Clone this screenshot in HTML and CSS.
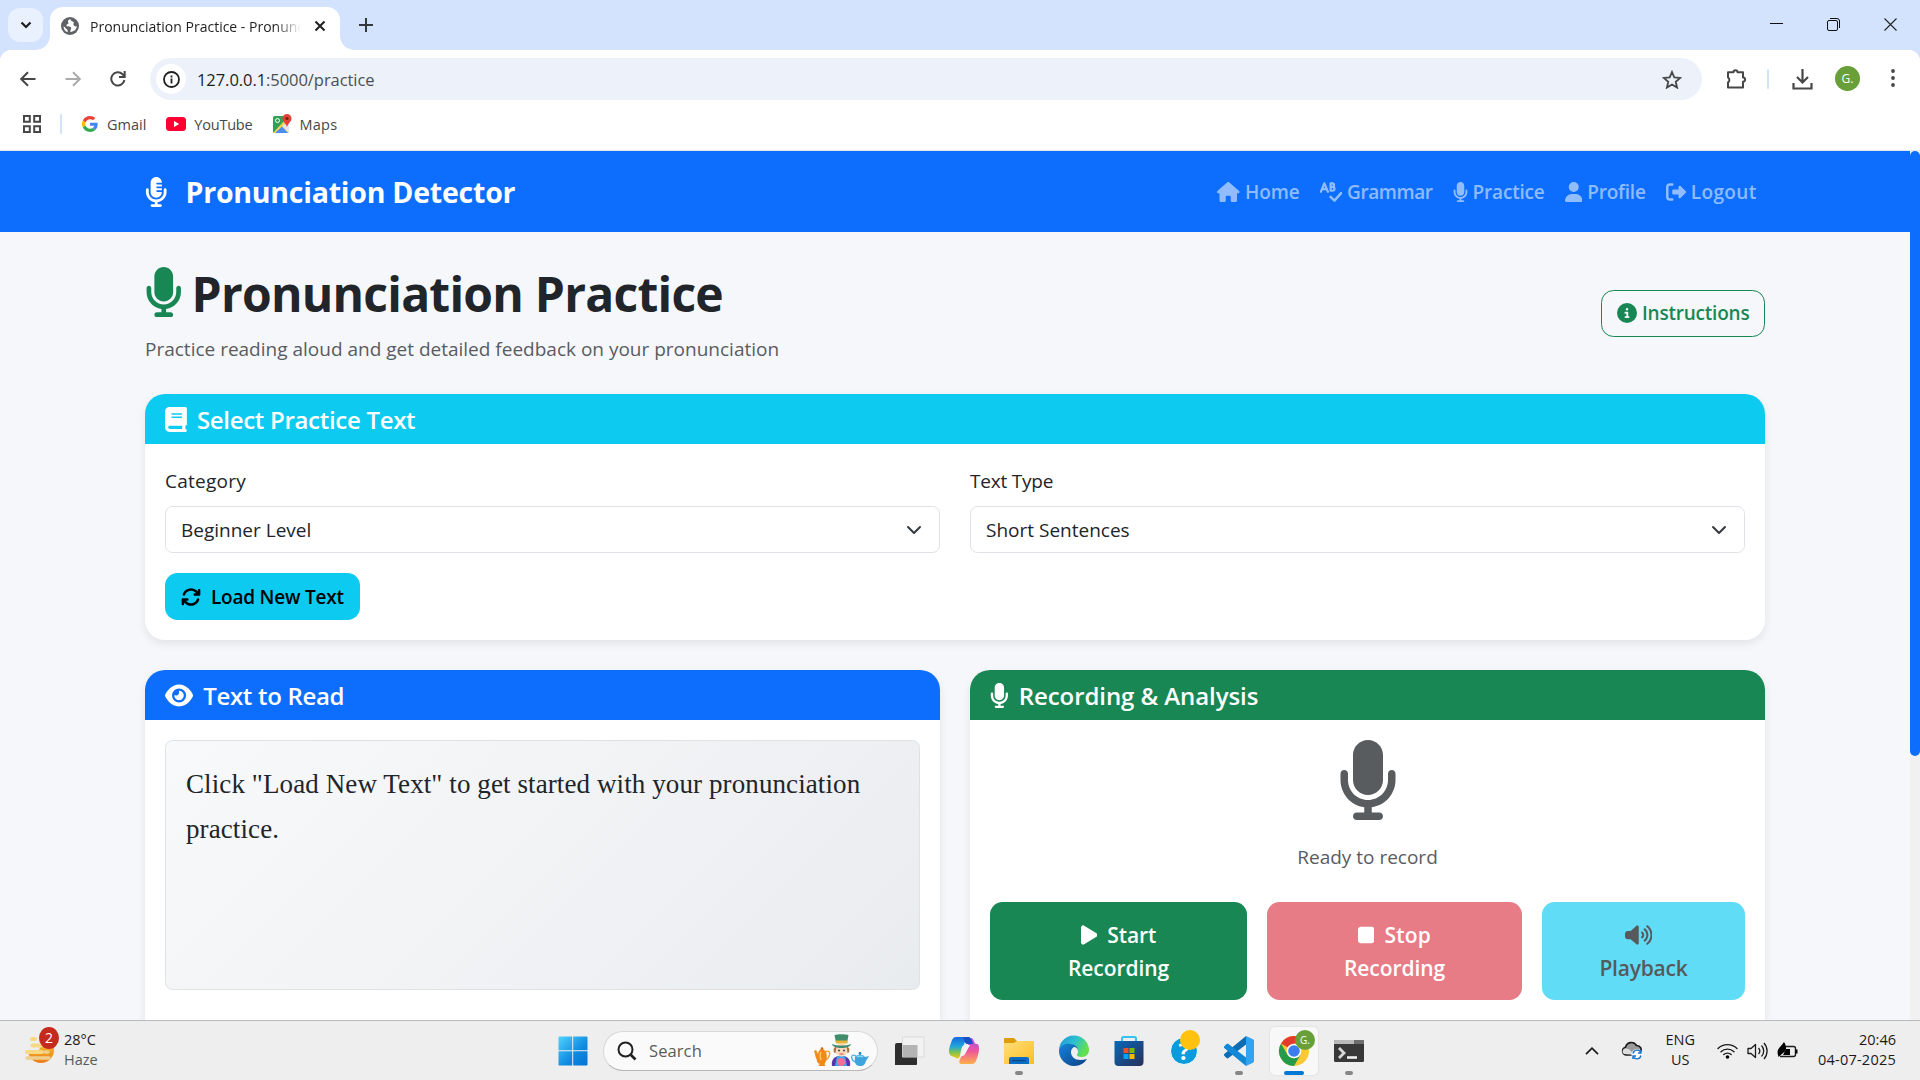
FILE: index.html
```html
<!DOCTYPE html>
<html lang="en">
<head>
<meta charset="utf-8">
<title>Pronunciation Practice - Pronunciation Detector</title>
<link rel="stylesheet" href="styles.css">
</head>
<body>
<svg width="0" height="0" class="defs">
  <defs>
    <symbol id="mic" viewBox="0 0 384 512"><path d="M192 0C139 0 96 43 96 96V256c0 53 43 96 96 96s96-43 96-96V96c0-53-43-96-96-96zM64 216c0-13.3-10.7-24-24-24s-24 10.7-24 24v40c0 89.1 66.2 162.7 152 174.4V464H120c-13.3 0-24 10.7-24 24s10.7 24 24 24h72 72c13.3 0 24-10.7 24-24s-10.7-24-24-24H216V430.4c85.8-11.7 152-85.3 152-174.4V216c0-13.3-10.7-24-24-24s-24 10.7-24 24v40c0 70.7-57.3 128-128 128s-128-57.3-128-128V216z"/></symbol>
    <linearGradient id="win" x1="0" y1="0" x2="1" y2="1"><stop offset="0" stop-color="#4fd3ff"/><stop offset=".6" stop-color="#0f8ae0"/><stop offset="1" stop-color="#0273d4"/></linearGradient>
    <linearGradient id="sun" x1="0" y1="0" x2="0" y2="1"><stop offset="0" stop-color="#f5c02c"/><stop offset="1" stop-color="#ee7a1c"/></linearGradient>
    <linearGradient id="folder" x1="0" y1="0" x2="1" y2="1"><stop offset="0" stop-color="#ffe07a"/><stop offset="1" stop-color="#fdbc22"/></linearGradient>
    <linearGradient id="edgeTop" x1="0" y1="0" x2="1" y2=".4"><stop offset="0" stop-color="#1d93dc"/><stop offset=".55" stop-color="#2cc0cf"/><stop offset="1" stop-color="#63e04e"/></linearGradient>
    <linearGradient id="edgeBot" x1="0" y1="0" x2="1" y2="1"><stop offset="0" stop-color="#1684d8"/><stop offset="1" stop-color="#0c3f86"/></linearGradient>
    <linearGradient id="store" x1="0" y1="0" x2="1" y2="1"><stop offset="0" stop-color="#0669b8"/><stop offset="1" stop-color="#2a2f5c"/></linearGradient>
    <linearGradient id="copA" x1="0" y1="0" x2="0" y2="1"><stop offset="0" stop-color="#1569e0"/><stop offset=".45" stop-color="#21a7d8"/><stop offset=".75" stop-color="#8bc540"/><stop offset="1" stop-color="#f3c51d"/></linearGradient>
    <linearGradient id="copB" x1="0" y1="0" x2="0" y2="1"><stop offset="0" stop-color="#a24df0"/><stop offset=".5" stop-color="#f0559b"/><stop offset="1" stop-color="#fcb04a"/></linearGradient>
  </defs>
</svg>

<header class="tabs">
  <div class="tab-search"><svg width="12" height="8" viewBox="0 0 12 8"><path d="M1.500 1.500 6 6l4.500-4.500" fill="none" stroke="#1f1f1f" stroke-width="2.200"/></svg></div>
  <div class="tab">
    <svg class="globe" width="18" height="18" viewBox="0 0 18 18"><circle cx="9" cy="9" r="9" fill="#5f6368"/><path d="M9.500 2.200C6 3 7 5 7.500 5.800 8 7 5.500 6.800 5.500 8.500c0 1.500 3.500.5 4.500 2 .8 1.300-1 2-.5 4.500C13 14.500 15.800 12.500 15.800 9c-1.500 1-3-.2-3.300-1.200C12 6.500 13.500 6 12.500 5c-1-.8-2.500-.5-3-2.800zM2.500 9.500c0 3 2 5 4 5.800.5-1.500 0-2.500-1.200-3.500-.8-.8-1.500-2-2.800-2.300z" fill="#fff"/></svg>
    <span class="tab-title"><span class="t t-tab">Pronunciation Practice - Pronunciation</span></span>
    <svg class="tab-close" width="12" height="12" viewBox="0 0 12 12"><path d="M1.500 1.500l9 9M10.500 1.500l-9 9" stroke="#1f1f1f" stroke-width="2"/></svg>
  </div>
  <svg class="new-tab" width="14" height="14" viewBox="0 0 14 14"><path d="M7 0v14M0 7h14" stroke="#33383d" stroke-width="2"/></svg>
  <div class="win-btns">
    <svg width="13" height="13" viewBox="0 0 13 13"><path d="M0 5.500h13" stroke="#111"/></svg>
    <svg width="13" height="13" viewBox="0 0 13 13"><rect x=".5" y="2.500" width="10" height="10" rx="1.500" fill="none" stroke="#111"/><path d="M3 .5h7a2.500 2.500 0 0 1 2.500 2.500v7" fill="none" stroke="#111"/></svg>
    <svg width="13" height="13" viewBox="0 0 13 13"><path d="M.5.5l12 12M12.500.5l-12 12" stroke="#222" stroke-width="1.100"/></svg>
  </div>
</header>

<div class="toolbar">
  <div class="nav-icons">
    <svg width="16" height="16" viewBox="0 0 16 16"><path d="M15.500 8H1.500M8 1.200 1.200 8 8 14.800" fill="none" stroke="#474747" stroke-width="2"/></svg>
    <svg width="16" height="16" viewBox="0 0 16 16"><path d="M.5 8h14M8 1.200 14.800 8 8 14.800" fill="none" stroke="#ababab" stroke-width="2"/></svg>
    <svg width="16" height="16" viewBox="0 0 16 16"><path d="M14.400 9A6.600 6.600 0 1 1 12.600 3.300L14.500 5.200M14.700 0v5.900H9" fill="none" stroke="#474747" stroke-width="2"/></svg>
  </div>
  <div class="omnibox">
    <div class="site-info"><svg width="17" height="17" viewBox="0 0 17 17"><circle cx="8.500" cy="8.500" r="7.500" fill="none" stroke="#1f1f1f" stroke-width="1.800"/><path d="M8.500 7.500V12.500M8.500 4.500v2" stroke="#1f1f1f" stroke-width="1.800"/></svg></div>
    <span class="t t-url">127.0.0.1<span class="dim">:5000/practice</span></span>
    <svg class="star" width="20" height="19" viewBox="0 0 20 19"><path d="M10 2l2.300 5.400 5.900.5-4.500 3.900 1.400 5.800-5.100-3.100-5.100 3.100 1.400-5.800L1.800 7.900l5.900-.5z" fill="none" stroke="#474747" stroke-width="1.800"/></svg>
  </div>
  <svg class="ext" width="21" height="21" viewBox="0 0 21 21"><path d="M2 4.200h5.500a2 2 0 0 1 4 0H17v5.300a2 2 0 0 1 0 4.200v5.800H2v-5.200a2.800 2.800 0 0 0 0-4.800z" fill="none" stroke="#474747" stroke-width="2" stroke-linejoin="round"/></svg>
  <i class="sep"></i>
  <svg class="dl" width="21" height="21" viewBox="0 0 21 21"><path d="M10.500 0v13M5 8l5.500 5.500L16 8M1.500 14v5.500h18V14" fill="none" stroke="#474747" stroke-width="2.200"/></svg>
  <span class="avatar">G.</span>
  <svg class="kebab" width="4" height="18" viewBox="0 0 4 18"><circle cx="2" cy="2" r="1.900"/><circle cx="2" cy="9" r="1.900"/><circle cx="2" cy="16" r="1.900"/></svg>
</div>

<div class="bookmarks">
  <svg class="apps" width="18" height="18" viewBox="0 0 18 18"><path d="M1 1h5.800v5.800H1zM11.200 1H17v5.800h-5.800zM1 11.200h5.800V17H1zM11.200 11.200H17V17h-5.800z" fill="none" stroke="#474747" stroke-width="2"/></svg>
  <i class="sep"></i>
  <svg class="g" width="16" height="16" viewBox="0 0 48 48"><path fill="#EA4335" d="M24 9.500c3.500 0 6.700 1.200 9.200 3.600l6.900-6.900C35.900 2.400 30.500 0 24 0 14.600 0 6.500 5.400 2.600 13.200l8 6.200C12.400 13.700 17.700 9.500 24 9.500z"/><path fill="#4285F4" d="M47 24.600c0-1.600-.2-3.100-.4-4.600H24v9h12.900c-.6 3-2.200 5.500-4.700 7.200l7.700 6C44.400 38 47 32 47 24.600z"/><path fill="#FBBC05" d="M10.500 28.600a14.500 14.500 0 0 1 0-9.200l-8-6.200a24 24 0 0 0 0 21.600z"/><path fill="#34A853" d="M24 48c6.500 0 12-2.100 15.900-5.800l-7.700-6c-2.200 1.500-4.900 2.300-8.200 2.300-6.300 0-11.600-4.200-13.500-9.900l-8 6.200C6.500 42.600 14.600 48 24 48z"/></svg>
  <span class="t t-bm">Gmail</span>
  <svg class="yt" width="20" height="14" viewBox="0 0 20 14"><rect width="20" height="14" rx="3.500" fill="#f03"/><path d="M8 4v6l5.200-3z" fill="#fff"/></svg>
  <span class="t t-bm tight">YouTube</span>
  <svg class="maps" width="19" height="20" viewBox="0 0 19 20"><rect y="2" width="16" height="17" rx="1.500" fill="#34a056"/><path d="M0 19 12 6l4 3v10z" fill="#fdd347"/><path d="M2 19l7-6.500 6 6.500z" fill="#4c8df6"/><path d="M9 12l7 7V7z" fill="#e3e6ea"/><circle cx="4.500" cy="6.500" r="2" fill="none" stroke="#fff"/><path d="M14 0a4.500 4.500 0 0 1 4.500 4.500C18.500 8 15 9 14 13 13 9 9.500 8 9.500 4.500A4.500 4.500 0 0 1 14 0z" fill="#e04436"/><circle cx="14" cy="4.500" r="1.600" fill="#7c1d17"/></svg>
  <span class="t t-bm wide">Maps</span>
</div>

<div class="viewport">
<main class="page">
  <nav class="navbar">
    <svg class="ico brand-ico" viewBox="0 0 384 512"><path d="M192 0C139 0 96 43 96 96V256c0 53 43 96 96 96s96-43 96-96H208c-8.800 0-16-7.200-16-16s7.200-16 16-16h80V192H208c-8.800 0-16-7.200-16-16s7.200-16 16-16h80V128H208c-8.800 0-16-7.200-16-16s7.200-16 16-16h80c0-53-43-96-96-96zM320 240v16c0 70.700-57.300 128-128 128s-128-57.300-128-128V216c0-13.300-10.700-24-24-24s-24 10.700-24 24v40c0 89.100 66.200 162.700 152 174.400V464H120c-13.300 0-24 10.700-24 24s10.700 24 24 24h72 72c13.300 0 24-10.700 24-24s-10.700-24-24-24H216V430.400c85.800-11.700 152-85.300 152-174.400V216c0-13.300-10.700-24-24-24s-24 10.700-24 24v24z"/></svg>
    <span class="t t-brand">Pronunciation Detector</span>
    <div class="links">
      <a><svg class="ico w576" viewBox="0 0 576 512"><path d="M575.800 255.500c0 18-15 32.100-32 32.100h-32l.7 160.200c0 2.700-.2 5.400-.5 8.100V472c0 22.100-17.900 40-40 40H456c-1.100 0-2.200 0-3.300-.1c-1.400 .1-2.800 .1-4.200 .1H416 392c-22.100 0-40-17.900-40-40V448 384c0-17.700-14.300-32-32-32H256c-17.700 0-32 14.300-32 32v64 24c0 22.100-17.900 40-40 40H160 128.100c-1.500 0-3-.1-4.500-.2c-1.200 .1-2.400 .2-3.600 .2H104c-22.100 0-40-17.900-40-40V360c0-.9 0-1.900 .1-2.800V287.600H32c-18 0-32-14-32-32.100c0-9 3-17 10-24L266.400 8c7-7 15-8 22-8s15 2 21 7L564.800 231.500c8 7 12 15 11 24z"/></svg><span class="t t-nav">Home</span></a>
      <a><svg class="ico w576" viewBox="0 0 576 512"><path d="M22 250 112 34l90 216M56 180h112M272 34v190h50a49 49 0 0 0 0-98h-50 42a46 46 0 0 0 0-92z" fill="none" stroke="currentColor" stroke-width="56" stroke-linecap="round" stroke-linejoin="round"/><path d="M270 380l100 96 170-190" fill="none" stroke="currentColor" stroke-width="64" stroke-linecap="round" stroke-linejoin="round"/></svg><span class="t t-nav">Grammar</span></a>
      <a><svg class="ico w384"><use href="#mic"/></svg><span class="t t-nav">Practice</span></a>
      <a><svg class="ico w448" viewBox="0 0 448 512"><path d="M224 256A128 128 0 1 0 224 0a128 128 0 1 0 0 256zm-45.700 48C79.800 304 0 383.800 0 482.300C0 498.700 13.300 512 29.700 512H418.300c16.400 0 29.700-13.300 29.700-29.700C448 383.800 368.200 304 269.700 304H178.300z"/></svg><span class="t t-nav">Profile</span></a>
      <a><svg class="ico w512" viewBox="0 0 512 512"><path d="M377.900 105.900L500.700 228.700c7.200 7.200 11.300 17.100 11.300 27.300s-4.100 20.100-11.300 27.300L377.900 406.100c-6.400 6.400-15 9.900-24 9.900c-18.700 0-33.900-15.200-33.900-33.900l0-62.100-128 0c-17.700 0-32-14.300-32-32l0-64c0-17.700 14.300-32 32-32l128 0 0-62.100c0-18.700 15.200-33.900 33.900-33.900c9 0 17.600 3.600 24 9.900zM160 96L96 96c-17.700 0-32 14.300-32 32l0 256c0 17.700 14.300 32 32 32l64 0c17.700 0 32 14.300 32 32s-14.300 32-32 32l-64 0c-53 0-96-43-96-96L0 128C0 75 43 32 96 32l64 0c17.700 0 32 14.300 32 32s-14.300 32-32 32z"/></svg><span class="t t-nav">Logout</span></a>
    </div>
  </nav>

  <div class="container">
    <div class="heading">
      <div>
        <h1><svg class="ico h1-ico"><use href="#mic"/></svg><span class="t t-h1">Pronunciation Practice</span></h1>
        <p class="lead"><span class="t t-body">Practice reading aloud and get detailed feedback on your pronunciation</span></p>
      </div>
      <button class="btn btn-outline"><svg class="ico w512" viewBox="0 0 512 512"><path d="M256 512A256 256 0 1 0 256 0a256 256 0 1 0 0 512zM216 336h24V272H216c-13.300 0-24-10.700-24-24s10.700-24 24-24h48c13.300 0 24 10.700 24 24v88h8c13.300 0 24 10.700 24 24s-10.700 24-24 24H216c-13.300 0-24-10.700-24-24s10.700-24 24-24zm40-208a32 32 0 1 1 0 64 32 32 0 1 1 0-64z"/></svg><span class="t t-nav tight">Instructions</span></button>
    </div>

    <section class="card">
      <h5 class="card-head cyan"><svg class="ico h5-ico w448" viewBox="0 0 448 512"><path d="M96 0C43 0 0 43 0 96V416c0 53 43 96 96 96H384h32c17.700 0 32-14.300 32-32s-14.300-32-32-32V384c17.700 0 32-14.300 32-32V32c0-17.700-14.300-32-32-32H384 96zm0 384H352v64H96c-17.700 0-32-14.300-32-32s14.300-32 32-32zm32-240c0-8.800 7.200-16 16-16H336c8.800 0 16 7.200 16 16s-7.200 16-16 16H144c-8.800 0-16-7.200-16-16zm16 48H336c8.800 0 16 7.200 16 16s-7.200 16-16 16H144c-8.800 0-16-7.200-16-16s7.200-16 16-16z"/></svg><span class="t t-h5">Select Practice Text</span></h5>
      <div class="card-body">
        <div class="row">
          <div class="field"><label><span class="t t-body wide">Category</span></label>
            <div class="select"><span class="t t-body">Beginner Level</span><svg width="16" height="16" viewBox="0 0 16 16"><path d="m2 5 6 6 6-6" fill="none" stroke="#343a40" stroke-width="2" stroke-linecap="round" stroke-linejoin="round"/></svg></div></div>
          <div class="field"><label><span class="t t-body tight">Text Type</span></label>
            <div class="select"><span class="t t-body">Short Sentences</span><svg width="16" height="16" viewBox="0 0 16 16"><path d="m2 5 6 6 6-6" fill="none" stroke="#343a40" stroke-width="2" stroke-linecap="round" stroke-linejoin="round"/></svg></div></div>
        </div>
        <button class="btn btn-load"><svg class="ico w512" viewBox="0 0 512 512"><path d="M105.100 202.600c7.700-21.800 20.200-42.300 37.800-59.800c62.500-62.500 163.800-62.500 226.300 0L386.300 160H352c-17.700 0-32 14.300-32 32s14.300 32 32 32H463.500c0 0 0 0 0 0h.4c17.700 0 32-14.300 32-32V80c0-17.700-14.300-32-32-32s-32 14.300-32 32v35.200L414.400 97.600c-87.500-87.500-229.300-87.500-316.800 0C73.200 122 55.600 150.700 44.800 181.400c-5.900 16.700 2.900 34.900 19.500 40.800s34.900-2.900 40.800-19.500zM39 289.300c-5 1.500-9.800 4.200-13.700 8.200c-4 4-6.700 8.800-8.100 14c-.3 1.200-.6 2.500-.8 3.800c-.3 1.700-.4 3.400-.4 5.100V432c0 17.700 14.300 32 32 32s32-14.300 32-32V396.900l17.600 17.500c87.500 87.400 229.300 87.400 316.700 0c24.400-24.400 42.100-53.100 52.900-83.800c5.900-16.700-2.900-34.900-19.500-40.800s-34.900 2.900-40.800 19.500c-7.700 21.800-20.200 42.300-37.800 59.800c-62.500 62.500-163.800 62.500-226.300 0l-.1-.1L125.600 352H160c17.700 0 32-14.300 32-32s-14.300-32-32-32H48.400c-1.600 0-3.200 .1-4.800 .3s-3.100 .5-4.600 1z"/></svg><span class="t t-nav tight">Load New Text</span></button>
      </div>
    </section>

    <div class="cols">
      <section class="card">
        <h5 class="card-head blue"><svg class="ico h5-ico w576" viewBox="0 0 576 512"><path d="M288 32c-80.800 0-145.500 36.800-192.600 80.600C48.600 156 17.300 208 2.500 243.700c-3.300 7.900-3.300 16.700 0 24.600C17.300 304 48.600 356 95.400 399.400C142.500 443.200 207.200 480 288 480s145.500-36.800 192.600-80.600c46.800-43.500 78.100-95.400 93-131.100c3.300-7.900 3.300-16.700 0-24.600c-14.900-35.700-46.200-87.700-93-131.100C433.500 68.800 368.800 32 288 32zM144 256a144 144 0 1 1 288 0 144 144 0 1 1 -288 0zm144-64c0 35.300-28.700 64-64 64c-7.100 0-13.900-1.200-20.300-3.300c-5.500-1.800-11.900 1.600-11.700 7.400c.3 6.900 1.300 13.800 3.200 20.700c13.700 51.200 66.400 81.600 117.600 67.900s81.600-66.400 67.900-117.600c-11.100-41.500-47.800-69.400-88.600-71.100c-5.800-.2-9.200 6.100-7.400 11.700c2.100 6.400 3.300 13.200 3.300 20.300z"/></svg><span class="t t-h5">Text to Read</span></h5>
        <div class="card-body"><div class="reading">Click "Load New Text" to get started with your pronunciation practice.</div></div>
      </section>
      <section class="card">
        <h5 class="card-head green"><svg class="ico h5-ico w384"><use href="#mic"/></svg><span class="t t-h5 even">Recording &amp; Analysis</span></h5>
        <div class="card-body rec">
          <svg class="ico big-mic"><use href="#mic"/></svg>
          <p class="status"><span class="t t-body">Ready to record</span></p>
          <div class="rec-btns">
            <button class="rb start-rec"><span class="line"><svg class="ico w384" viewBox="0 0 384 512"><path d="M73 39c-14.800-9.100-33.400-9.400-48.500-.9S0 62.600 0 80V432c0 17.400 9.400 33.400 24.500 41.900s33.700 8.100 48.500-.9L361 297c14.300-8.700 23-24.200 23-41s-8.700-32.200-23-41L73 39z"/></svg><span class="t t-rb">Start</span></span><span class="line"><span class="t t-rb">Recording</span></span></button>
            <button class="rb stop"><span class="line"><svg class="ico w384" viewBox="0 0 384 512"><path d="M0 128C0 92.700 28.700 64 64 64H320c35.300 0 64 28.700 64 64V384c0 35.300-28.700 64-64 64H64c-35.300 0-64-28.700-64-64V128z"/></svg><span class="t t-rb wide">Stop</span></span><span class="line"><span class="t t-rb">Recording</span></span></button>
            <button class="rb play"><span class="line"><svg class="ico w640 vol-ico" viewBox="0 0 640 512"><path d="M533.600 32.500C598.500 85.200 640 165.800 640 256s-41.500 170.700-106.400 223.500c-10.300 8.400-25.400 6.800-33.800-3.500s-6.800-25.400 3.500-33.800C557.500 398.200 592 331.200 592 256s-34.500-142.200-88.700-186.300c-10.300-8.400-11.800-23.500-3.500-33.800s23.500-11.800 33.800-3.500zM473.100 107c43.200 35.200 70.900 88.900 70.900 149s-27.700 113.800-70.900 149c-10.300 8.400-25.400 6.800-33.800-3.500s-6.800-25.400 3.500-33.800C475.300 341.300 496 301.100 496 256s-20.700-85.300-53.200-111.800c-10.300-8.400-11.800-23.500-3.500-33.800s23.500-11.800 33.800-3.500zm-60.500 74.500C434.100 199.100 448 225.900 448 256s-13.900 56.900-35.400 74.500c-10.300 8.400-25.400 6.800-33.800-3.500s-6.800-25.400 3.500-33.800C393.100 284.400 400 271 400 256s-6.900-28.400-17.700-37.300c-10.300-8.400-11.800-23.500-3.500-33.800s23.500-11.800 33.800-3.500zM301.100 34.800C312.600 40 320 51.400 320 64V448c0 12.600-7.400 24-18.900 29.200s-25 3.100-34.400-5.300L131.800 352H64c-35.300 0-64-28.700-64-64V224c0-35.300 28.700-64 64-64h67.800L266.700 40.100c9.400-8.400 22.900-10.400 34.400-5.300z"/></svg></span><span class="line"><span class="t t-rb tight">Playback</span></span></button>
          </div>
        </div>
      </section>
    </div>
  </div>
</main>
<div class="scroll"><i></i></div>
</div>

<footer class="taskbar">
  <div class="weather">
    <div class="w-ico"><svg width="30" height="28" viewBox="0 0 30 28"><path d="M3 13a13 13 0 0 0 26 0V5H18l-4 8z" fill="url(#sun)"/><g stroke-linecap="round" stroke-width="4" stroke="#f7d883"><path d="M7 2h3M7.500 8.500h9M2 15h15" /></g><path d="M2 21h22M20 15h3" stroke="#f0cf8c" stroke-width="3.500" stroke-linecap="round"/></svg><b>2</b></div>
    <div class="two"><span class="t t-sm">28°C</span><span class="t t-sm soft">Haze</span></div>
  </div>
  <svg class="start" width="30" height="30" viewBox="0 0 30 30"><path fill="url(#win)" d="M1 .5h13.200v13.700H.5V1zM15.200.5h13.300a1 1 0 0 1 1 .5v13.200H15.200zM.5 15.200h13.700v14.300H1a1 1 0 0 1-.5-1zM15.200 15.200h14.300V28.500a1 1 0 0 1-1 1H15.200z"/></svg>
  <div class="search"><svg width="20" height="20" viewBox="0 0 20 20"><circle cx="8.500" cy="8.500" r="7" fill="none" stroke="#222" stroke-width="2"/><path d="M13.500 13.500l5 5" stroke="#222" stroke-width="2.600"/></svg><span class="t t-search">Search</span>
    <svg class="hatter" width="57" height="33" viewBox="0 0 57 33"><path d="M12.500 18c3-2 5 0 4 3s-3 5-5 5" fill="none" stroke="#f59a2c" stroke-width="1.400"/><path d="M1 17l2-1c1 1 1 3 2 4 0-3 2-5 4-5s4 2 4.500 5c1 4-.5 8-2 10l1 2H5.500l1-2C4 29 4 27 3.500 25 2 23 2.500 20 1 17z" fill="#f08a16"/><circle cx="9" cy="14.500" r="1.300" fill="#d2690f"/><path d="M8 18c-1 2-1 5 0 8" fill="none" stroke="#ffc46b" stroke-width="1.500"/><path d="M19 32c-1-6 2-9 6-10h6c4 1 7 4 6 10z" fill="#5b35a8"/><path d="M24 22h8l2 10H22z" fill="#3fa4e8"/><circle cx="28.500" cy="16" r="6.500" fill="#fbd9bd"/><path d="M21 14c-1 3 0 5 1.500 5l1-7zM36 14c1 3 0 5-1.500 5l-1-7z" fill="#b5713d"/><path d="M21.500 1C25 0 32 0 35.500 1L34 9H23z" fill="#3f8d6d"/><path d="M23 6.500h11.500v3H23z" fill="#e8b339"/><path d="M19 10c5 2 14 2 19 0 0 2-4 4-9.500 4S19 12 19 10z" fill="#3f8d6d"/><circle cx="26" cy="16.500" r="1" fill="#345"/><circle cx="31" cy="16.500" r="1" fill="#345"/><path d="M26.500 20h4" stroke="#c8574d"/><circle cx="28" cy="28" r="4" fill="#f0709a"/><path d="M43 22c-4-2-5 0-4 3s3 3 5 3" fill="none" stroke="#4db3e8" stroke-width="1.400"/><path d="M42 23c2-3 8-3 10 0l4-1-3 5c-1 3-2 5-6 5s-6-3-5-9z" fill="#3da4dd"/><path d="M44 23c1-1 5-1 6 0" stroke="#8fd6f5" fill="none" stroke-width="1.500"/><circle cx="47" cy="19.500" r="1.400" fill="#2785bd"/></svg></div>
  <div class="apps-row">
    <div class="app"><svg width="32" height="30" viewBox="0 0 32 30"><path d="M2 9a2 2 0 0 1 2-2h20v21a1 1 0 0 1-1 1H2z" fill="#2e2e2e"/><path d="M9.500 1h21.500v20H9.500z" fill="#f2f2f2" stroke="#dcdcdc"/><path d="M9.500 9H24.500V21h-15z" fill="#b4b4b4"/></svg></div>
    <div class="app"><svg width="32" height="30" viewBox="0 0 32 30"><path d="M20 9c1-4 2-5 3-7 3 0 3 6 5 6 3 0 3 2 3 5 0 5-2 9-3 12-1 2-2 3-4 3H13c-2 0-2-3-1-5l3-5c2 0 3-2 5-9z" fill="url(#copB)"/><path d="M12 20c-1 3-3 3-6 1-3-1-5-2-5-6 0-4 2-8 3-11 1-2 2-3 4-3h12c-2 1-3 4-4 8-2 0-3 5-4 11z" fill="url(#copA)"/><path d="M15 1h6c2 0 3 4 4 7h-6c-2 0-3-4-4-7z" fill="#1b4fc8"/><path d="M19 9h3l-5 9c-1 2-2 2-5 2z" fill="#f4f4f4"/></svg></div>
    <div class="app on"><svg width="32" height="30" viewBox="0 0 32 30"><path d="M1 3a1 1 0 0 1 1-1h9l3 3h16a1 1 0 0 1 1 1v8H1z" fill="#dd9c0a"/><path d="M1 7h10l3-2h16a1 1 0 0 1 1 1v22H1z" fill="url(#folder)"/><path d="M6 28v-5a2 2 0 0 1 2-2h16a2 2 0 0 1 2 2v5z" fill="#0b6cc4"/><path d="M9 24.500h14" stroke="#0a4a90" stroke-width="1.500"/></svg></div>
    <div class="app"><svg width="32" height="32" viewBox="0 0 32 32"><path d="M1 16a15 15 0 0 1 30-1c0 4-3 7-7 7-3 0-5-1-5-2s1-1 1-4c0-3-3-6-7-6-5 0-9 2-12 6z" fill="url(#edgeTop)"/><path d="M1 16C2 11 7 8 12 9c5 0 8 3 8 7 0-2-2-4-4-4-2 1-3 3-3 5 0 6 6 10 16 7a15 15 0 0 1-13 7C8 31 1 24 1 16z" fill="url(#edgeBot)"/></svg></div>
    <div class="app"><svg width="30" height="32" viewBox="0 0 30 32"><path d="M8 7V3.500a1.500 1.500 0 0 1 1.500-1.500h11A1.500 1.500 0 0 1 22 3.500V7" fill="none" stroke="#35c1f1" stroke-width="2"/><path d="M.5 6h29v21a4 4 0 0 1-4 4h-21a4 4 0 0 1-4-4z" fill="url(#store)"/><path d="M9.500 13h5v5h-5z" fill="#f25022"/><path d="M15.500 13h5v5h-5z" fill="#7fba00"/><path d="M9.500 19h5v5h-5z" fill="#00a4ef"/><path d="M15.500 19h5v5h-5z" fill="#ffb900"/></svg></div>
    <div class="app help"><b>?</b><i></i></div>
    <div class="app on"><svg width="32" height="32" viewBox="0 0 32 32"><path d="M23 1v8.500L5.500 23c-.6.500-1.400.5-2 0l-2-2c-.7-.7-.7-1.500 0-2.200z" fill="#0b6db5"/><path d="M23 31v-8.500L5.500 9c-.6-.5-1.400-.5-2 0l-2 2c-.7.700-.7 1.500 0 2.200z" fill="#1288d6"/><path d="M23 1l7 3.200c.7.4 1 1 1 1.800v20c0 .8-.3 1.400-1 1.800L23 31z" fill="#2fa4f2"/></svg></div>
    <div class="app active"><svg width="32" height="32" viewBox="0 0 32 32"><circle cx="16" cy="16" r="15" fill="#fcc934"/><path d="M16 16 3 8.500A15 15 0 0 1 29 8.500H16z" fill="#e33b2e"/><path d="M16 31A15 15 0 0 1 3 8.500L9.500 19.800 16 23.500l6.500-3.700z" fill="#259a49"/><circle cx="16" cy="16" r="7.300" fill="#fff"/><circle cx="16" cy="16" r="5.800" fill="#3b7ded"/></svg><span>G.</span></div>
    <div class="app on"><svg width="32" height="24" viewBox="0 0 32 24"><rect x="1" y="1" width="30" height="22" rx="1.500" fill="#383838"/><path d="M2 1h9v4H1V2zM11 1h10v4H11z" fill="#b9b9b9"/><path d="M21 1h9a1 1 0 0 1 1 1v3H21z" fill="#6d6d6d"/><path d="M6 9l5 5-5 5" fill="none" stroke="#d8d8d8" stroke-width="2.800"/><path d="M14 18.500h10" stroke="#f0f0f0" stroke-width="2.600"/></svg></div>
  </div>
  <div class="tray">
    <svg width="14" height="8" viewBox="0 0 14 8"><path d="M1 7.200 7 1.200l6 6" fill="none" stroke="#1b1b1b" stroke-width="1.700"/></svg>
    <svg class="cloud" width="22" height="19" viewBox="0 0 22 19"><path d="M5 14a4 4 0 0 1-.5-7.800A6 6 0 0 1 15.500 4.500a4.500 4.500 0 0 1 4 7L12 14z" fill="#9b9b9b" stroke="#1b1b1b" stroke-width="1.600"/><path d="M3 13a3 3 0 0 1 1-5.500c4 0 6 2 8 6z" fill="#dedede"/><circle cx="16" cy="13.500" r="5.500" fill="#fff"/><path d="M12 12.500a4.200 4.200 0 0 1 8-.8M20 9v3h-3M20 14.500a4.200 4.200 0 0 1-8 .8M12 18v-3h3" fill="none" stroke="#1872c8" stroke-width="1.400"/></svg>
    <div class="two mid"><span class="t t-sm">ENG</span><span class="t t-sm">US</span></div>
    <svg class="wifi" width="21" height="16" viewBox="0 0 21 16"><g fill="none" stroke="#1b1b1b" stroke-width="1.400" stroke-linecap="round"><path d="M1 5.500a13.500 13.500 0 0 1 19 0M4 8.800a9.300 9.300 0 0 1 13 0M6.800 11.600a5.300 5.300 0 0 1 7.400 0"/></g><circle cx="10.500" cy="14" r="1.800"/></svg>
    <svg class="vol" width="21" height="18" viewBox="0 0 21 18"><g fill="none" stroke="#1b1b1b" stroke-width="1.300" stroke-linejoin="round"><path d="M1 6.500h3L8.500 2.500v13L4 11.500H1zM11.500 6a4.500 4.500 0 0 1 0 6M14.500 3.500a8 8 0 0 1 0 11M17 1a12 12 0 0 1 0 16" /></g></svg>
    <svg class="bat" width="21" height="17" viewBox="0 0 21 17"><path d="M9 4.500h7.500a2 2 0 0 1 2 2v6a2 2 0 0 1-2 2H3" fill="none" stroke="#1b1b1b" stroke-width="1.400"/><path d="M18.500 7.500h2v4h-2zM9 7h4v6H6z" /><path d="M7 0c3 4 3 9-1 11L1.500 15 1 13C-1 7 4 5 7 0z"/></svg>
    <div class="two end"><span class="t t-sm">20:46</span><span class="t t-sm wide">04-07-2025</span></div>
  </div>
</footer>
</body>
</html>
```
FILE: styles.css
```css
* { box-sizing: border-box; }
body {
  margin: 0;
  width: 1920px;
  height: 1080px;
  overflow: hidden;
  display: flex;
  flex-direction: column;
  background: #fff;
  font-family: "Open Sans", "Noto Sans", sans-serif;
  color: #212529;
}
svg { display: block; flex: none; }
.defs { position: absolute; }
button { font-family: inherit; border: 0; }
h1, h5, p { margin: 0; }
.t { display: inline-block; white-space: nowrap; flex: none; }

/* type styles */
.t-tab { font-size: 14px; }
.t-url { font-size: 16.500px; letter-spacing: -.06px; color: #1f1f1f; }
.t-bm { font-size: 14.500px; }
.t-brand { font-size: 28.500px; font-weight: 700; letter-spacing: -.23px; }
.t-nav { font-size: 19px; font-weight: 600; }
.t-h1 { font-size: 48px; font-weight: 700; letter-spacing: -.75px; padding-top: 2px; }
.t-body { font-size: 19px; }
.t-h5 { font-size: 24px; font-weight: 600; letter-spacing: -.3px; }
.t-rb { font-size: 21px; font-weight: 600; letter-spacing: -.08px; }
.t-sm { font-size: 14.500px; }
.t-search { font-size: 16.500px; letter-spacing: .1px; }
.tight { letter-spacing: -.22px; }
.wide { letter-spacing: .24px; }
.even { letter-spacing: -.08px; }

/* browser frame */
.tabs { height: 50px; background: #d3e3fd; display: flex; padding: 7px 0 0 8px; }
.tab-search { width: 35px; height: 34px; margin-top: 1px; border-radius: 12px; background: #e9f1fe; display: grid; place-items: center; }
.tab {
  position: relative;
  width: 290px;
  height: 43px;
  margin-left: 7px;
  padding: 0 0 6px 11px;
  border-radius: 13px 13px 0 0;
  background: #fff;
  display: flex;
  align-items: center;
}
.tab::before, .tab::after { content: ""; position: absolute; bottom: 0; width: 14px; height: 14px; }
.tab::before { left: -14px; background: radial-gradient(circle at 0 0, transparent 13.500px, #fff 14px); }
.tab::after { right: -14px; background: radial-gradient(circle at 100% 0, transparent 13.500px, #fff 14px); }
.tab-title { width: 212px; margin-left: 11px; overflow: hidden; color: #1f1f1f; -webkit-mask-image: linear-gradient(90deg, #000 185px, transparent 211px); }
.tab-close { margin-left: 12px; }
.new-tab { margin: 11px 0 0 19px; }
.win-btns { margin-left: auto; display: flex; gap: 44px; padding: 11px 23px 0 0; }
.toolbar {
  height: 57px;
  padding: 8px 0 0 20px;
  display: flex;
  align-items: flex-start;
  background: radial-gradient(circle at 12px 12px, #fff 12px, #d3e3fd 12.500px) 0 0 / 12px 12px no-repeat,
    radial-gradient(circle at 0 12px, #fff 12px, #d3e3fd 12.500px) 100% 0 / 12px 12px no-repeat, #fff;
}
.nav-icons { display: flex; gap: 29px; padding-top: 13px; width: 130px; }
.omnibox { width: 1552px; height: 42px; border-radius: 21px; background: #ecf1fa; display: flex; align-items: center; padding: 0 20px 0 6px; }
.site-info { width: 30px; height: 30px; border-radius: 50%; background: #fff; display: grid; place-items: center; margin-right: 11px; }
.dim { color: #4c4f52; }
.star { margin-left: auto; }
.ext { margin: 10px 0 0 24px; }
.sep { width: 2px; height: 20px; border-radius: 1px; background: #d3e3fd; flex: none; }
.toolbar .sep { margin: 11px 0 0 20px; }
.dl { margin: 11px 0 0 23px; }
.avatar { width: 25px; height: 25px; margin: 8px 0 0 22px; border-radius: 50%; background: #689f38; color: #fff; font-size: 12px; line-height: 25px; text-align: center; }
.kebab { margin: 11px 0 0 31px; fill: #474747; }
.bookmarks { height: 44px; padding: 0 0 9px 23px; display: flex; align-items: center; border-bottom: 1px solid #e3e6ea; color: #474747; }
.bookmarks .sep { margin: 0 20px 0 19px; }
.g { margin-right: 9px; }
.yt { margin: 0 8px 0 20px; }
.maps { margin: 0 7px 0 21px; }

/* page */
.viewport { height: 869px; display: flex; overflow: hidden; }
.page { width: 1910px; background: #f5f7fb; overflow: hidden; }
.scroll { width: 10px; background: #f1f1f1; }
.scroll i { display: block; height: 605px; border-radius: 5px; background: #0d6efd; }
.ico { height: 1em; fill: currentColor; flex: none; }
.w384 { width: .75em; }
.w448 { width: .875em; }
.w512 { width: 1em; }
.w576 { width: 1.125em; }
.w640 { width: 1.25em; }

.navbar { height: 81px; background: #0d6efd; color: #fff; display: flex; align-items: center; padding: 0 153.500px 0 145px; }
.brand-ico { width: 22.500px; font-size: 30px; margin-right: 18px; }
.links { margin-left: auto; display: flex; gap: 20px; font-size: 20px; color: rgba(255, 255, 255, .55); }
.links a { display: flex; align-items: center; gap: 5px; }
.links a:nth-child(1) { letter-spacing: -.1px; }
.links a:nth-child(2) { letter-spacing: -.42px; }
.links a:nth-child(3) { letter-spacing: -.19px; }
.links a:nth-child(4) { letter-spacing: -.18px; }
.links a:nth-child(5) { letter-spacing: .35px; }

.container { width: 1620px; margin-left: 145px; }
.heading { display: flex; justify-content: space-between; align-items: center; height: 102px; margin: 30px 0; }
h1 { display: flex; align-items: center; height: 60px; font-weight: 700; font-size: 50px; }
.h1-ico { width: 37.500px; color: #198754; margin-right: 9px; }
.lead { height: 30px; margin-top: 12px; line-height: 30px; color: #595c5f; }
.btn { display: flex; align-items: center; height: 47px; padding: 0 16px; border-radius: 12.500px; font-size: 20px; }
.btn-outline { width: 164px; border: 1px solid #198754; background: transparent; color: #198754; gap: 5px; padding: 0 15px; }
.btn-load { width: 195px; margin-top: 20px; background: #0dcaf0; color: #000; gap: 10px; }

.card { background: #fff; border-radius: 20px; box-shadow: 0 4px 10px rgba(0, 0, 0, .08); overflow: hidden; }
.card-head { height: 50px; padding: 0 20px; display: flex; align-items: center; gap: 10px; color: #fff; font-size: 25px; }
.cyan { background: #0dcaf0; }
.blue { background: #0d6efd; }
.green { background: #198754; }
.card-body { padding: 20px; }
.row { display: flex; gap: 30px; }
.field { flex: 1; }
label { display: block; height: 42px; line-height: 34px; }
.select { height: 47px; border: 1px solid #dee2e6; border-radius: 7.500px; display: flex; align-items: center; justify-content: space-between; padding: 0 17px 0 15px; }

.cols { display: grid; grid-template-columns: 795px 795px; gap: 30px; margin-top: 30px; }
.cols .card { height: 420px; }
.reading {
  height: 250px;
  border: 1px solid #dee2e6;
  border-radius: 7.500px;
  padding: 21px 20px;
  font: 27px/45px "Liberation Serif", serif;
  letter-spacing: .1px;
  background: linear-gradient(135deg, #f8f9fa, #e9ecef);
}
.rec { text-align: center; color: #595c5f; }
.big-mic { width: 60px; font-size: 80px; margin: 0 auto; }
.status { height: 30px; line-height: 30px; margin-top: 22px; }
.rec-btns { display: flex; gap: 20px; margin-top: 30px; }
.rb { height: 98px; border-radius: 12.500px; padding: 16px 0; color: #fff; font-size: 22px; }
.line { height: 33px; display: flex; align-items: center; justify-content: center; gap: 10px; }
.start-rec { width: 257px; background: #198754; }
.stop { width: 255px; background: #e77c87; }
.play { width: 203px; background: #61dcf6; color: #575a5c; }
.vol-ico { margin-right: 10px; }

/* taskbar */
.taskbar { height: 60px; border-top: 1px solid #b9babd; background: #eee; display: flex; align-items: center; color: #1b1b1b; }
.weather { display: flex; align-items: center; gap: 9px; padding-left: 25px; width: 558px; }
.w-ico { position: relative; }
.w-ico b { position: absolute; left: 14px; top: -10px; width: 20px; height: 22px; border-radius: 50%; background: #c42b1c; color: #fff; font: 14px/21px "Open Sans", sans-serif; text-align: center; }
.two { display: flex; flex-direction: column; line-height: 20px; margin-bottom: 2px; }
.mid { align-items: center; }
.end { align-items: flex-end; }
.soft { color: #5a5a5a; }
.search { width: 275px; height: 40px; margin-left: 15px; border: 1px solid #d8d8d8; border-bottom-color: #b8b8b8; border-radius: 20px; background: #fafafa; display: flex; align-items: center; padding: 0 7px 0 13px; color: #5c5c5c; }
.search .t { margin-left: 12px; }
.hatter { margin-left: auto; }
.apps-row { display: flex; margin-left: 7px; gap: 7px; }
.app { position: relative; width: 48px; height: 48px; display: grid; place-items: center; border-radius: 5px; }
.on::after, .active::after { content: ""; position: absolute; left: 20px; bottom: 0; width: 8px; height: 4px; border-radius: 2px; background: #868686; }
.active { background: #f8f8f8; box-shadow: 0 0 1px 1px #e4e4e4; }
.active::after { left: 14px; width: 20px; background: #0078d4; }
.active span { position: absolute; left: 25px; top: 3px; width: 20px; height: 20px; border-radius: 50%; background: #689f38; color: #fff; font-size: 10px; line-height: 20px; text-align: center; }
.help b { width: 28px; height: 28px; border-radius: 50%; background: #0a9bdc; border: 1px solid #fff; color: #fff; font-size: 23px; line-height: 27px; text-align: center; }
.help i { position: absolute; left: 20px; top: 3px; width: 20px; height: 20px; border-radius: 50%; background: #ffc20e; }
.tray { margin-left: auto; display: flex; align-items: center; padding-right: 24px; }
.cloud { margin: 0 22px; }
.wifi { margin-left: 22px; }
.vol { margin-left: 9px; }
.bat { margin: 0 20px 0 9px; }
```
